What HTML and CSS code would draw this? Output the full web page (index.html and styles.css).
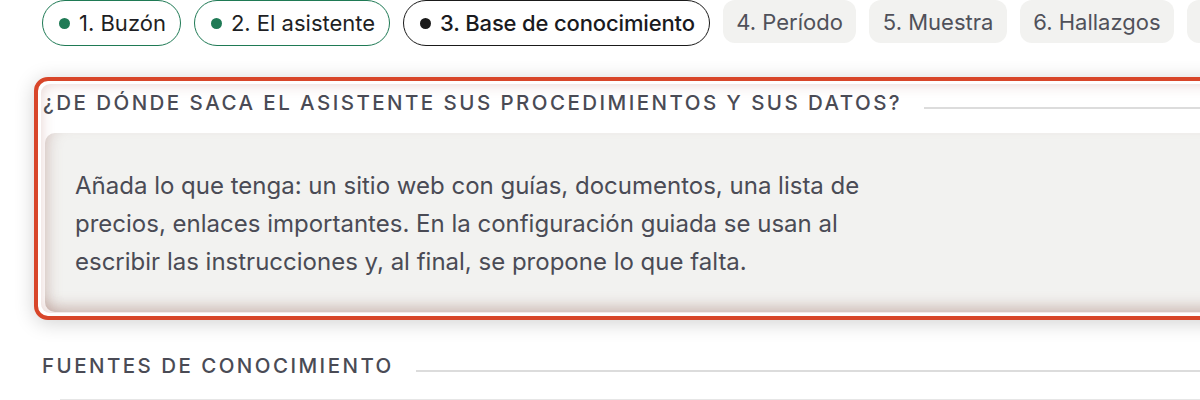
FILE: index.html
```html
<!DOCTYPE html>
<html lang="es">
<head>
<meta charset="utf-8">
<title>Base de conocimiento</title>
<link rel="stylesheet" href="styles.css">
</head>
<body>
<nav class="steps">
  <span class="step done"><span class="dot"></span>1. Buzón</span>
  <span class="step done"><span class="dot"></span>2. El asistente</span>
  <span class="step current"><span class="dot"></span>3. Base de conocimiento</span>
  <span class="step todo">4. Período</span>
  <span class="step todo">5. Muestra</span>
  <span class="step todo">6. Hallazgos</span>
  <span class="step todo">7. Informe</span>
</nav>

<div class="spot">
  <section class="kb">
    <div class="section-head">
      <h2>¿De dónde saca el asistente sus procedimientos y sus datos?</h2>
      <span class="rule"></span>
    </div>
    <div class="panel">
      <p>Añada lo que tenga: un sitio web con guías, documentos, una lista de precios, enlaces importantes. En la configuración guiada se usan al escribir las instrucciones y, al final, se propone lo que falta.</p>
    </div>
  </section>
</div>

<div class="section-head sources">
  <h2>Fuentes de conocimiento</h2>
  <span class="rule"></span>
</div>
<div class="list-top"></div>
</body>
</html>
```
FILE: styles.css
```css
html, body {
  margin: 0;
  background: #ffffff;
  overflow: hidden;
}
body {
  padding: 0 0 0 42px;
  font-family: Inter, "Noto Sans", sans-serif;
  color: #4a4b55;
  width: 1300px;
}

.steps {
  display: flex;
  gap: 13px;
  align-items: flex-start;
  white-space: nowrap;
}
.step {
  display: inline-flex;
  align-items: center;
  gap: 9px;
  height: 46px;
  box-sizing: border-box;
  padding: 0 14px 0 16px;
  font-size: 22px;
  line-height: 1;
  border-radius: 23px;
}
.step .dot {
  width: 11px;
  height: 11px;
  border-radius: 50%;
  background: currentColor;
}
.step.done {
  border: 1.5px solid #1f7a55;
  color: #1e1f24;
}
.step.done .dot { background: #1f7a55; }
.step.current {
  border: 1.5px solid #1a1a1a;
  color: #1a1a1e;
  font-weight: 500;
  letter-spacing: -0.15px;
}
.step.current .dot { background: #1a1a1a; }
.step.todo {
  height: 43px;
  background: #f2f2f0;
  border-radius: 12px;
  color: #50515a;
  padding: 0 13.5px;
}

.spot {
  margin: 31px 0 0 -8px;
  border: 4px solid #d8462a;
  border-radius: 14px;
  padding: 3px;
  background: #fff;
  box-shadow: 0 3px 20px rgba(0, 0, 0, 0.18);
}
.kb {
  border-radius: 9px;
  padding: 7px 0 1px 2px;
  box-shadow: inset 0 0 14px rgba(170, 95, 85, 0.28);
}

.section-head {
  display: flex;
  align-items: center;
  gap: 22px;
}
.section-head h2 {
  margin: 0;
  font-size: 20.5px;
  line-height: 24px;
  font-weight: 500;
  letter-spacing: 2.45px;
  text-transform: uppercase;
  color: #4a4b55;
  white-space: nowrap;
}
.section-head .rule {
  flex: 1;
  height: 1.5px;
  margin-top: 10px;
  background: #dcdcdc;
}

.panel {
  margin: 18px 0 0 2px;
  background: #f2f2f0;
  border-radius: 10px;
  padding: 34px 30px 31px;
  box-shadow:
    inset 0 -14px 14px -8px rgba(150, 100, 90, 0.35),
    inset 12px 0 14px -8px rgba(150, 100, 90, 0.25);
}
.panel p {
  margin: 0;
  max-width: 830px;
  font-size: 24px;
  line-height: 38px;
  color: #4a4b55;
}

.sources {
  margin-top: 34px;
}
.list-top {
  margin: 21px 0 0 18px;
  height: 1.5px;
  background: #e6e6e6;
}
```
